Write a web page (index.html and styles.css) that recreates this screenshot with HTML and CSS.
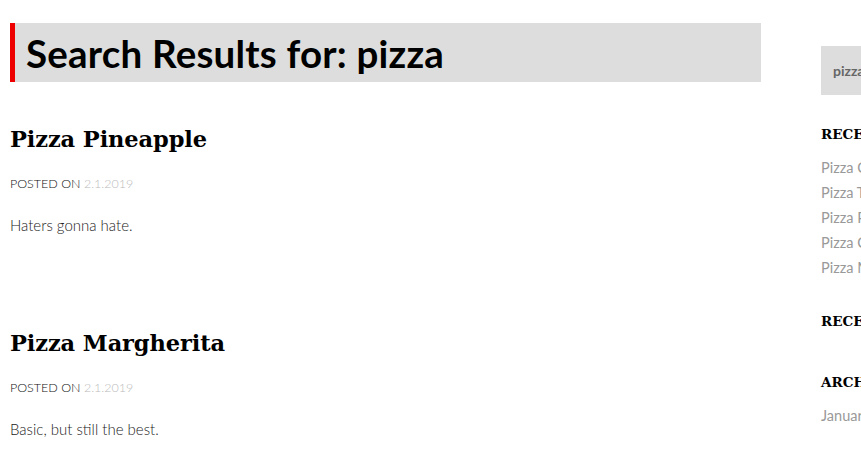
FILE: index.html
```html
<!DOCTYPE html>
<html>
<head>
<meta charset="utf-8">
<link rel="stylesheet" href="styles.css">
</head>
<body>
<div class="page">
  <main class="main">
    <header class="page-header">
      <h1 class="page-title">Search Results for: pizza</h1>
    </header>
    <article class="post">
      <h2 class="post-title">Pizza Pineapple</h2>
      <div class="post-meta">POSTED ON <span class="date">2.1.2019</span></div>
      <p class="post-excerpt">Haters gonna hate.</p>
    </article>
    <article class="post">
      <h2 class="post-title">Pizza Margherita</h2>
      <div class="post-meta">POSTED ON <span class="date">2.1.2019</span></div>
      <p class="post-excerpt">Basic, but still the best.</p>
    </article>
  </main>
  <aside class="sidebar">
    <div class="search-box">pizza</div>
    <section class="widget">
      <h3 class="widget-title">RECENT POSTS</h3>
      <ul class="widget-list">
        <li>Pizza Calzone</li>
        <li>Pizza Tonno</li>
        <li>Pizza Pineapple</li>
        <li>Pizza Capricciosa</li>
        <li>Pizza Margherita</li>
      </ul>
    </section>
    <section class="widget">
      <h3 class="widget-title">RECENT COMMENTS</h3>
    </section>
    <section class="widget">
      <h3 class="widget-title">ARCHIVES</h3>
      <ul class="widget-list">
        <li>January 2019</li>
      </ul>
    </section>
  </aside>
</div>
</body>
</html>
```
FILE: styles.css
```css
html, body {
  margin: 0;
  padding: 0;
  background: #fff;
  overflow: hidden;
}
body {
  font-family: "Lato", "Open Sans", sans-serif;
  color: #222;
}
.page {
  display: flex;
  gap: 60px;
  padding: 23px 0 0 10px;
  width: 1300px;
}
.main {
  width: 751px;
  flex: none;
}
.page-header {
  background: #dddddd;
  border-left: 5px solid #ee0000;
  height: 59px;
  display: flex;
  align-items: center;
  padding-left: 11px;
}
.page-title {
  margin: 0;
  font-family: "Lato", sans-serif;
  font-weight: 700;
  font-size: 38.5px;
  color: #000;
  letter-spacing: 0.2px;
}
.post {
  padding-top: 41px;
  height: 163px;
}
.post-title {
  margin: 0;
  font-family: "DejaVu Serif", serif;
  font-weight: 700;
  font-size: 22.5px;
  letter-spacing: -0.1px;
  line-height: 32px;
  color: #000;
}
.post-meta {
  margin-top: 21px;
  font-size: 12.5px;
  line-height: 16px;
  color: #111;
  font-weight: 300;
}
.date {
  color: #bbb;
}
.post-excerpt {
  margin: 25px 0 0;
  font-size: 15px;
  line-height: 16px;
  font-weight: 300;
  color: #222;
}
.sidebar {
  width: 300px;
  flex: none;
  padding-top: 23px;
}
.search-box {
  background: #dddddd;
  height: 49px;
  display: flex;
  align-items: center;
  padding-left: 12px;
  font-weight: 700;
  font-size: 14px;
  color: #666;
}
.widget-title {
  margin: 0;
  font-family: "DejaVu Serif", serif;
  font-weight: 700;
  font-size: 13.5px;
  line-height: 18px;
  color: #000;
}
.widget:first-of-type {
  margin-top: 30px;
}
.widget-list {
  list-style: none;
  margin: 12px 0 0;
  padding: 0;
}
.widget-list li {
  font-size: 14.5px;
  line-height: 25px;
  font-weight: 400;
  color: #999;
}
.widget + .widget {
  margin-top: 32px;
}
.widget:nth-of-type(3) {
  margin-top: 43px;
}
```
